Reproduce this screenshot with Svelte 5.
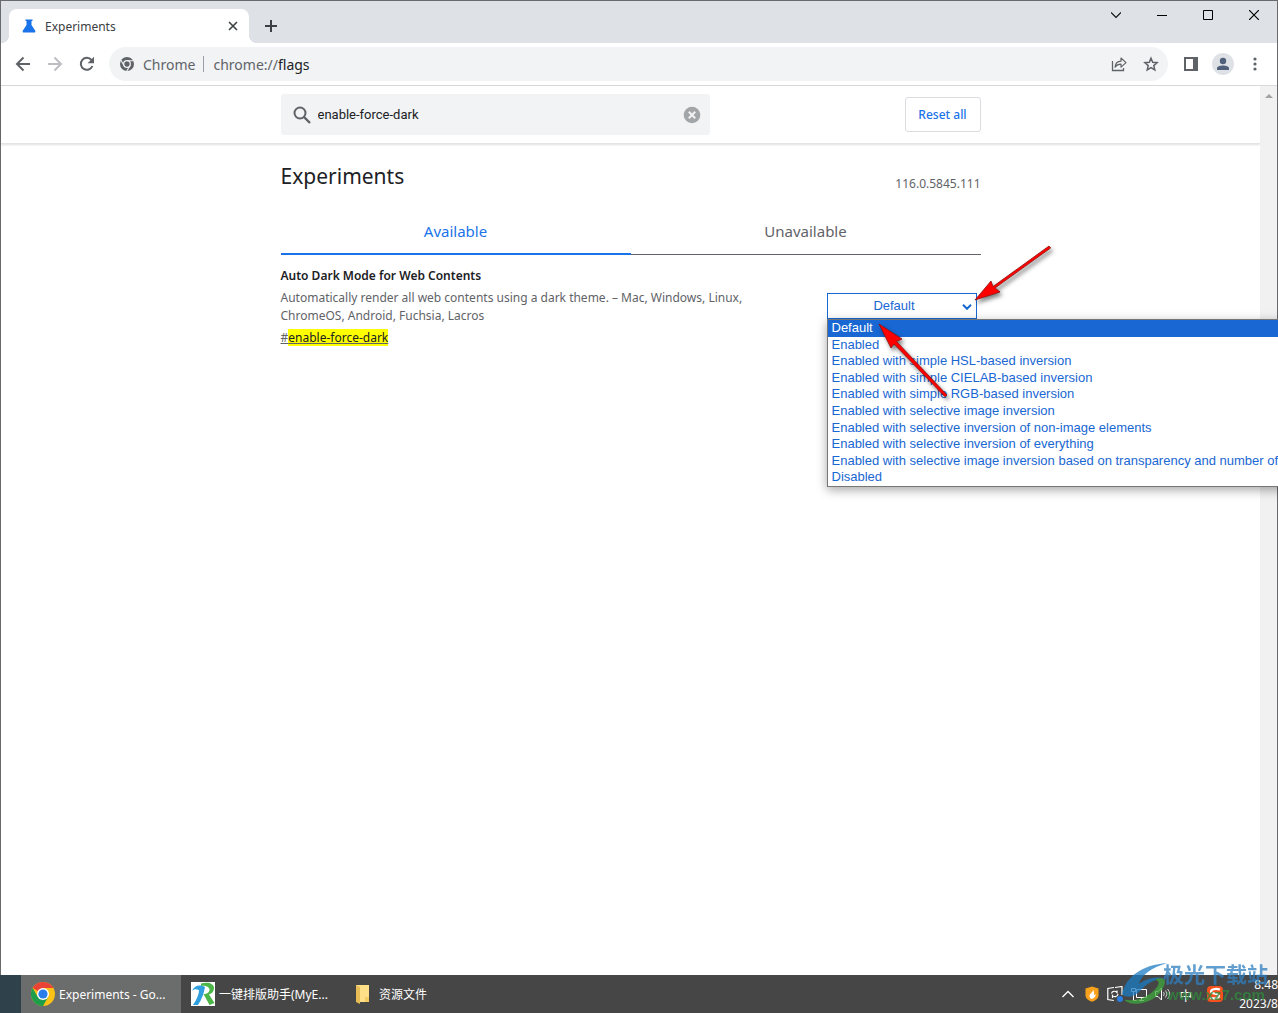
<script lang="ts">
  // Browser window on the flags page, with the desktop taskbar under it
  const options = [
    'Default',
    'Enabled',
    'Enabled with simple HSL-based inversion',
    'Enabled with simple CIELAB-based inversion',
    'Enabled with simple RGB-based inversion',
    'Enabled with selective image inversion',
    'Enabled with selective inversion of non-image elements',
    'Enabled with selective inversion of everything',
    'Enabled with selective image inversion based on transparency and number of',
    'Disabled',
  ];

  let query = $state('enable-force-dark');
  let selected = $state('Default');
  let tab = $state('Available');
</script>

<div class="desktop">
  <div class="window">
    <header class="titlebar">
      <div class="tab">
        <svg class="flask" width="14" height="14" viewBox="0 0 14 14" aria-hidden="true">
          <path d="M3.500.5h7v1.500H9.500v4l3.600 5.400c.7 1.100.2 2.100-1 2.100H1.900c-1.200 0-1.700-1-1-2.100L4.500 6V2h-1z" fill="#1a73e8" />
        </svg>
        <span class="tab-title">Experiments</span>
        <button class="icon-btn tab-close" aria-label="Close tab">
          <svg width="10" height="10" viewBox="0 0 10 10"><path d="M1 1l8 8M9 1l-8 8" stroke="#3c4043" stroke-width="1.600" /></svg>
        </button>
      </div>
      <button class="icon-btn new-tab" aria-label="New tab">
        <svg width="12" height="12" viewBox="0 0 12 12"><path d="M6 0v12M0 6h12" stroke="#3c4043" stroke-width="2" /></svg>
      </button>
      <div class="window-buttons">
        <button class="icon-btn" aria-label="Search tabs">
          <svg width="10" height="10" viewBox="0 0 10 10"><path d="M0 2.500l5 5 5-5" fill="none" stroke="#111" stroke-width="1.200" /></svg>
        </button>
        <button class="icon-btn" aria-label="Minimize">
          <svg width="10" height="10" viewBox="0 0 10 10"><path d="M0 5.500h10" stroke="#000" /></svg>
        </button>
        <button class="icon-btn" aria-label="Maximize">
          <svg width="10" height="10" viewBox="0 0 10 10"><path d="M.5.5h9v9h-9z" fill="none" stroke="#000" /></svg>
        </button>
        <button class="icon-btn" aria-label="Close">
          <svg width="10" height="10" viewBox="0 0 10 10"><path d="M0 0l10 10M10 0L0 10" stroke="#000" stroke-width="1.200" /></svg>
        </button>
      </div>
    </header>

    <div class="toolbar">
      <button class="icon-btn" aria-label="Back">
        <svg width="16" height="16" viewBox="0 0 16 16"><path d="M15 8H2M8.500 1.500L2 8l6.500 6.500" fill="none" stroke="#5f6368" stroke-width="2" /></svg>
      </button>
      <button class="icon-btn" aria-label="Forward" disabled>
        <svg width="16" height="16" viewBox="0 0 16 16"><path d="M1 8h13M7.500 1.500L14 8l-6.500 6.500" fill="none" stroke="#bcbec1" stroke-width="2" /></svg>
      </button>
      <button class="icon-btn" aria-label="Reload">
        <svg width="16" height="16" viewBox="0 0 16 16">
          <path d="M13.400 10A6 6 0 1 1 12.500 4" fill="none" stroke="#5f6368" stroke-width="2" />
          <path d="M15 .8v6.400H8.600z" fill="#5f6368" />
        </svg>
      </button>
      <div class="omnibox">
        <svg width="14" height="14" viewBox="0 0 14 14" aria-hidden="true">
          <circle cx="7" cy="7" r="7" fill="#5f6368" />
          <circle cx="7" cy="7" r="3.300" fill="#5f6368" stroke="#f1f3f4" stroke-width="1.300" />
          <path d="M7 3.700h6.300M4.100 8.700L1 3.300M9.900 8.700L6.800 14" stroke="#f1f3f4" stroke-width="1.100" />
        </svg>
        <span class="scheme">Chrome</span>
        <span class="divider"></span>
        <span class="url">chrome://<b>flags</b></span>
        <button class="icon-btn share" aria-label="Share">
          <svg width="16" height="16" viewBox="0 0 16 16">
            <path d="M1.500 5v9.500h11V12" fill="none" stroke="#5f6368" stroke-width="1.300" />
            <path d="M4 11.200C4.300 7.500 6.500 5.400 10 5.200V2l5 4.600-5 4.500V8.200C7.300 8.200 5.500 9 4 11.200z" fill="none" stroke="#5f6368" stroke-width="1.200" stroke-linejoin="round" />
          </svg>
        </button>
        <button class="icon-btn" aria-label="Bookmark">
          <svg width="16" height="16" viewBox="0 0 16 16"><path d="M8 2.200l1.700 4.100 4.400.4-3.300 2.900 1 4.300L8 11.600l-3.800 2.300 1-4.300-3.300-2.900 4.400-.4z" fill="none" stroke="#5f6368" stroke-width="1.500" /></svg>
        </button>
      </div>
      <button class="icon-btn" aria-label="Side panel">
        <svg width="14" height="14" viewBox="0 0 14 14"><path d="M0 0h14v14H0zM2 2v10h7V2z" fill="#5f6368" fill-rule="evenodd" /></svg>
      </button>
      <button class="icon-btn profile" aria-label="Profile">
        <svg width="14" height="14" viewBox="0 0 14 14"><circle cx="7" cy="4" r="3.200" fill="#50607a" /><path d="M1 13v-1.800C1 9.300 4.500 8.500 7 8.500s6 .8 6 2.700V13z" fill="#50607a" /></svg>
      </button>
      <button class="icon-btn more" aria-label="Menu">
        <svg width="4" height="14" viewBox="0 0 4 14" fill="#5f6368"><circle cx="2" cy="2" r="1.600" /><circle cx="2" cy="7" r="1.600" /><circle cx="2" cy="12" r="1.600" /></svg>
      </button>
    </div>

    <div class="viewport">
      <main class="page">
        <div class="page-header">
          <div class="column header-row">
            <label class="search">
              <svg width="18" height="18" viewBox="0 0 18 18" aria-hidden="true">
                <circle cx="7" cy="7" r="5.500" fill="none" stroke="#5f6368" stroke-width="2" />
                <path d="M11 11l6 6" stroke="#5f6368" stroke-width="2.400" />
              </svg>
              <input type="text" aria-label="Search flags" bind:value={query} />
              <button class="icon-btn" aria-label="Clear search" onclick={() => (query = '')}>
                <svg width="18" height="18" viewBox="0 0 18 18">
                  <circle cx="9" cy="9" r="8.300" fill="#a3a6a8" />
                  <path d="M5.800 5.800l6.400 6.400M12.200 5.800l-6.400 6.400" stroke="#f1f3f4" stroke-width="2" />
                </svg>
              </button>
            </label>
            <button class="reset">Reset all</button>
          </div>
        </div>

        <div class="column">
          <div class="heading">
            <h1>Experiments</h1>
            <span class="version">116.0.5845.111</span>
          </div>

          <div class="tabs" role="tablist">
            {#each ['Available', 'Unavailable'] as name}
              <button role="tab" class:active={tab === name} aria-selected={tab === name} onclick={() => (tab = name)}>{name}</button>
            {/each}
          </div>

          <section class="flag">
            <div class="flag-text">
              <h2>Auto Dark Mode for Web Contents</h2>
              <p>Automatically render all web contents using a dark theme. – Mac, Windows, Linux, ChromeOS, Android, Fuchsia, Lacros</p>
              <a href="#enable-force-dark">#<mark>enable-force-dark</mark></a>
            </div>
            <div class="flag-control">
              <select aria-label="Auto Dark Mode for Web Contents" bind:value={selected}>
                {#each options as option}
                  <option>{option}</option>
                {/each}
              </select>
              <svg class="chevron" width="10" height="6" viewBox="0 0 10 6" aria-hidden="true"><path d="M1 .8l4 4 4-4" fill="none" stroke="#1967d2" stroke-width="2" /></svg>
              <ul class="menu" role="listbox" aria-label="Options">
                {#each options as option}
                  <li role="option" aria-selected={option === selected} class:selected={option === selected}>{option}</li>
                {/each}
              </ul>
              <!-- pointer arrows over the drop-down -->
              <svg class="pointers" width="250" height="170" viewBox="0 0 250 170" aria-hidden="true">
                <g fill="#f00" stroke="#8e0f0f" stroke-width=".8" stroke-linejoin="round">
                  <path d="M158 59l16-19 2 5.500L232 5l1.600 2L178 47l5 4z" />
                  <path d="M62 83l23 15-5.500 2.500L130 154l-2 1.800L77 103l-3 4z" />
                </g>
              </svg>
            </div>
          </section>
        </div>
      </main>
      <div class="scrollbar">
        <svg width="8" height="4" viewBox="0 0 8 4" aria-hidden="true"><path d="M0 4l4-4 4 4z" fill="#a3a3a3" /></svg>
      </div>
    </div>
  </div>

  <footer class="taskbar">
    <button class="task active">
      <svg width="24" height="24" viewBox="0 0 24 24" aria-hidden="true">
        <circle cx="12" cy="12" r="12" fill="#fbc116" />
        <path d="M12 12L1.600 6A12 12 0 0 1 22.400 6H12z" fill="#ea4335" />
        <path d="M1.600 6A12 12 0 0 0 12 24l5.200-9L12 12 6.800 15z" fill="#1e9e4a" />
        <circle cx="12" cy="12" r="6" fill="#fff" />
        <circle cx="12" cy="12" r="4.600" fill="#2b7de9" />
      </svg>
      <span>Experiments - Go...</span>
    </button>
    <button class="task">
      <svg width="24" height="24" viewBox="0 0 24 24" aria-hidden="true">
        <path d="M0 0h24v24H0z" fill="#fff" />
        <path d="M10 1.500c7-2 13 0 13 4.500 0 3.500-2 5.500-5 6.500l5.500 8.500-5 2-6-11c4 0 6-2 6-4.500S14 3 10 4z" fill="#4cb648" />
        <path d="M1 9C3 4 8 2 14 5c-1 6-3 12-7 18H2c4-6 6-11 6-15-3-1-5-1-7 1z" fill="#2f9fe0" />
      </svg>
      <span>一键排版助手(MyE...</span>
    </button>
    <button class="task">
      <svg width="24" height="24" viewBox="0 0 24 24" aria-hidden="true">
        <path d="M5 3h13v17H5z" fill="#ffdf87" />
        <path d="M5 3l4 2v17l-4-2z" fill="#e9bd55" />
        <path d="M14 15h4v5h-4z" fill="#f5cb62" />
      </svg>
      <span>资源文件</span>
    </button>

    <div class="tray">
      <svg class="tray-more" width="12" height="8" viewBox="0 0 12 8" aria-hidden="true"><path d="M.5 7L6 1.500 11.500 7" fill="none" stroke="#fff" stroke-width="1.300" /></svg>
      <svg width="14" height="16" viewBox="0 0 14 16" aria-hidden="true">
        <path d="M7 .5l6.500 2v7c0 3-3 5-6.500 6.300C3.500 14.500.5 12.500.5 9.500v-7z" fill="#f8a11b" />
        <path d="M8 3.500c.5 2.500-3.500 4-3.500 6.500 0 1.500 1 2.500 2 3 3-.5 4.500-2.500 4-5-.5.500-1 1-1.500 1 .5-2-.2-4-1-5.500z" fill="#fff" />
      </svg>
      <svg width="16" height="16" viewBox="0 0 16 16" aria-hidden="true">
        <path d="M7 1.500L.8 2.500v11l6 1M8 1.500l7-1V9" fill="none" stroke="#fff" stroke-width="1.200" />
        <path d="M4.500 7.500C5 5 8 4.500 10 6.500V4.500M11 8c-.5 3-4 3.500-5.500 1.500V12" fill="none" stroke="#fff" stroke-width="1.200" />
        <circle cx="13" cy="13" r="3" fill="#2a7de1" />
      </svg>
      <svg width="16" height="16" viewBox="0 0 16 16" aria-hidden="true">
        <path d="M5.500 3.500h10v8h-10zM8 14.500h5M10.500 11.500v3" fill="none" stroke="#fff" />
        <path d="M.5 2.500h4v3h-4zM2.500 5.500v9h3" fill="#464646" stroke="#fff" />
      </svg>
      <svg width="16" height="16" viewBox="0 0 16 16" aria-hidden="true">
        <path d="M.5 5.500h2.500l3.500-3.500v12L3 10.500H.5z" fill="none" stroke="#fff" />
        <path d="M8.500 6q1.500 2 0 4M10.500 4.500q3 3.500 0 7M12.500 3q4.500 5 0 10" fill="none" stroke="#ccc" />
      </svg>
      <span class="ime">中</span>
      <svg width="16" height="16" viewBox="0 0 16 16" aria-hidden="true">
        <rect width="16" height="16" rx="4" fill="#f4511e" />
        <path d="M13 3.500C8 2 4 3.500 4 5.500c0 3 8 1.500 8 4.500 0 2-4.500 3-9 2" fill="none" stroke="#fff" stroke-width="2.200" />
      </svg>
      <div class="clock">
        <span>8:48</span>
        <span>2023/8</span>
      </div>
    </div>
  </footer>

  <div class="watermark">
    <svg width="48" height="42" viewBox="1 0 46 40" aria-hidden="true">
      <path d="M2 31C5 14 22 2 45 1 30 5 21 12 18 21c8-6 17-8 25-5-10 0-18 5-24 12-5 5-11 7-17 3z" fill="#1b7cc4" />
      <path d="M4 36c13 2 25-3 32-13 2-3 1-5-2-6 5-3 10-1 9 3-3 12-15 20-29 20-4 0-8-2-10-4z" fill="#3fa83c" />
    </svg>
    <div class="watermark-text">
      <span class="brand">极光下载站</span>
      <span class="site">www.xz7.com</span>
    </div>
  </div>
</div>

<style>
  :global(body) {
    margin: 0;
  }

  .desktop {
    position: relative;
    display: flex;
    flex-direction: column;
    height: 100vh;
    overflow: hidden;
    background: #464646;
    font-family: 'Noto Sans', 'Noto Sans CJK SC', sans-serif;
    font-size: 12px;
    color: #202124;
  }

  button {
    font: inherit;
    border: 0;
    background: none;
    padding: 0;
  }
  svg {
    display: block;
    flex: none;
  }
  .icon-btn {
    display: flex;
    align-items: center;
    justify-content: center;
    flex: none;
  }

  .window {
    flex: 1;
    min-height: 0;
    display: flex;
    flex-direction: column;
    box-sizing: border-box;
    border: 1px solid #6a6a6d;
    border-bottom: 0;
    background: #fff;
  }

  /* tab strip */
  .titlebar {
    display: flex;
    height: 42px;
    padding-left: 8px;
    background: #dee1e6;
  }
  .tab {
    position: relative;
    display: flex;
    align-items: center;
    box-sizing: border-box;
    width: 240px;
    height: 34px;
    margin-top: 8px;
    padding: 0 10px 0 13px;
    border-radius: 8px 8px 0 0;
    background: #fff;
    color: #3c4043;
  }
  .tab::before,
  .tab::after {
    content: '';
    position: absolute;
    bottom: 0;
    width: 8px;
    height: 8px;
  }
  .tab::before {
    right: 100%;
    background: radial-gradient(circle at 0 0, #dee1e6 8px, #fff 8px);
  }
  .tab::after {
    left: 100%;
    background: radial-gradient(circle at 100% 0, #dee1e6 8px, #fff 8px);
  }
  .tab-title {
    flex: 1;
    padding-left: 9px;
  }
  .tab-close {
    width: 12px;
    height: 16px;
  }
  .new-tab {
    width: 28px;
    height: 28px;
    margin: 11px 0 0 8px;
  }
  .window-buttons {
    display: flex;
    margin-left: auto;
  }
  .window-buttons button {
    width: 46px;
    height: 28px;
  }

  .toolbar {
    display: flex;
    align-items: center;
    gap: 16px;
    height: 42px;
    padding: 0 15px 0 14px;
    border-bottom: 1px solid #d9dadc;
  }
  .omnibox {
    flex: 1;
    display: flex;
    align-items: center;
    height: 34px;
    margin-left: -2px;
    padding: 0 9px 0 11px;
    border-radius: 17px;
    background: #f1f3f4;
    color: #5f6368;
    font-size: 14px;
  }
  .scheme {
    padding-left: 9px;
  }
  .divider {
    width: 1px;
    height: 16px;
    margin: 0 9px 0 8px;
    background: #9aa0a6;
  }
  .url b {
    font-weight: 400;
    color: #202124;
  }
  .share {
    margin: 0 16px 0 auto;
  }
  .profile {
    width: 22px;
    height: 22px;
    border-radius: 50%;
    background: #dee1e6;
    margin: 0 -2px;
  }
  .more {
    width: 14px;
  }

  .viewport {
    flex: 1;
    min-height: 0;
    display: flex;
  }
  .page {
    flex: 1;
    min-width: 0;
  }
  .scrollbar {
    display: flex;
    justify-content: center;
    width: 17px;
    padding-top: 8px;
    box-sizing: border-box;
    background: #f1f1f1;
  }
  .column {
    width: 700px;
    max-width: 100%;
    margin: 0 auto;
  }

  .page-header {
    padding: 8px 0;
    border-bottom: 1px solid #e3e4e5;
    box-shadow: 0 1px 2px rgba(0, 0, 0, 0.12);
  }
  .header-row {
    display: flex;
    align-items: center;
    justify-content: space-between;
  }
  .search {
    display: flex;
    align-items: center;
    box-sizing: border-box;
    width: 429px;
    height: 41px;
    padding: 0 9px 0 12px;
    border-radius: 3px;
    background: #f1f3f4;
  }
  .search input {
    flex: 1;
    min-width: 0;
    padding: 0 7px;
    border: 0;
    outline: 0;
    background: none;
    font: 13px Roboto, sans-serif;
    color: #202124;
  }
  .reset {
    box-sizing: border-box;
    width: 76px;
    height: 35px;
    border: 1px solid #dadce0;
    border-radius: 3px;
    color: #1a73e8;
    font-weight: 500;
  }

  .heading {
    display: flex;
    align-items: center;
    justify-content: space-between;
    height: 64px;
  }
  h1 {
    margin: 0;
    font-size: 21px;
    font-weight: 400;
  }
  .version {
    padding-top: 14px;
    color: #5f6368;
  }

  .tabs {
    display: flex;
  }
  .tabs button {
    flex: 1;
    box-sizing: border-box;
    height: 47px;
    border-bottom: 1px solid #5f6368;
    color: #5f6368;
    font-size: 15px;
  }
  .tabs .active {
    border-bottom: 2px solid #1a73e8;
    color: #1a73e8;
  }

  .flag {
    display: flex;
    justify-content: space-between;
    padding: 12px 4px 0 0;
  }
  .flag-text {
    width: 480px;
  }
  h2 {
    margin: 0;
    font-size: 12px;
    line-height: 18px;
    font-weight: 600;
  }
  .flag-text p {
    margin: 4px 0;
    line-height: 18px;
    color: #5f6368;
  }
  .flag-text a {
    display: block;
    line-height: 18px;
    color: #5f6368;
  }
  mark {
    background: #ff0;
    color: #202124;
  }

  .flag-control {
    position: relative;
    width: 150px;
    height: 26px;
    margin-top: 26px;
    font-family: 'Liberation Sans', Arial, sans-serif;
    font-size: 13px;
    color: #1967d2;
  }
  select {
    appearance: none;
    box-sizing: border-box;
    width: 100%;
    height: 26px;
    padding: 0 15px 2px 0;
    border: 1px solid #1967d2;
    border-radius: 0;
    background: #fff;
    font: inherit;
    color: inherit;
    text-align-last: center;
  }
  .chevron {
    position: absolute;
    top: 11px;
    right: 5px;
  }
  .menu {
    position: absolute;
    top: 26px;
    left: 0;
    z-index: 1;
    display: grid;
    grid-template-rows: repeat(10, 1fr);
    width: 480px;
    height: 166px;
    margin: 0;
    padding: 0;
    border: 1px solid #767676;
    background: #fff;
    box-shadow: 0 3px 10px rgba(0, 0, 0, 0.35);
    list-style: none;
    line-height: 16px;
    white-space: nowrap;
  }
  .menu li {
    padding-left: 4px;
  }
  .menu .selected {
    background: #1967d2;
    color: #fff;
  }
  .pointers {
    position: absolute;
    top: -52px;
    left: -10px;
    z-index: 2;
    filter: drop-shadow(2px 3px 2px rgba(0, 0, 0, 0.5));
    pointer-events: none;
  }

  .taskbar {
    display: flex;
    height: 38px;
    padding-left: 21px;
    background: linear-gradient(90deg, #2f424b 21px, #464646 21px);
    color: #fff;
  }
  .task {
    display: flex;
    align-items: center;
    gap: 4px;
    width: 160px;
    padding: 0 10px;
    color: #fff;
    white-space: nowrap;
  }
  .task.active {
    background: #6b6c6c;
  }
  .tray {
    display: flex;
    align-items: center;
    gap: 8px;
    margin-left: auto;
  }
  .tray-more {
    margin-right: 3px;
  }
  .ime {
    margin-right: 7px;
    font-size: 13px;
  }
  .clock {
    display: flex;
    flex-direction: column;
    align-items: flex-end;
    margin-left: 8px;
    line-height: 19px;
  }

  .watermark {
    position: absolute;
    right: 10px;
    bottom: 9px;
    display: flex;
    opacity: 0.75;
    pointer-events: none;
  }
  .watermark-text {
    display: flex;
    flex-direction: column;
    margin-left: -6px;
  }
  .brand {
    font-size: 21px;
    line-height: 24px;
    font-weight: 700;
    color: #2e7fc0;
  }
  .site {
    padding-left: 4px;
    font: 700 15px 'Liberation Sans', sans-serif;
    color: #2f8a3c;
  }
</style>
